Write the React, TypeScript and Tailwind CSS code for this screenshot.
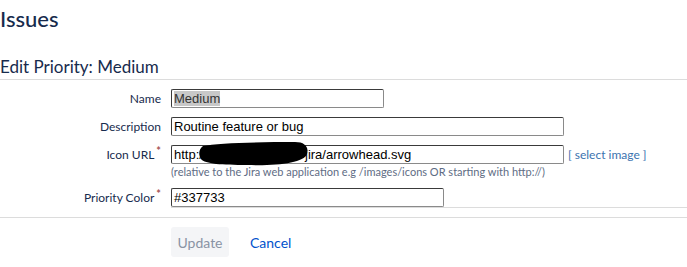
import React from "react";

function Label({ text, required }: { text: string; required?: boolean }) {
  return (
    <div className="w-[161px] shrink-0 text-right text-[12px] leading-[18px] text-[#172b4d] font-['Lato',sans-serif]">
      {text}
      {required && <span className="relative -top-[4px] ml-[2px] text-[11px] font-bold text-[#a85555]">*</span>}
    </div>
  );
}

function Box({ w, children }: { w: string; children: React.ReactNode }) {
  return (
    <div
      className={`${w} relative h-[19px] overflow-hidden rounded-[2px] border border-[#3a3a3a] border-r-[#8a8a8a] border-b-[#8a8a8a] bg-white pl-[2px] text-[13px] leading-[17px] text-black font-['Liberation_Sans',Arial,sans-serif]`}
    >
      {children}
    </div>
  );
}

export default function App() {
  return (
    <div className="relative h-[267px] w-[687px] overflow-hidden bg-white font-['Lato',sans-serif]">
      <h1 className="pt-[3px] text-[22px] leading-[32px] font-medium text-[#172b4d] font-['Lato',sans-serif]">
        Issues
      </h1>
      <h2 className="mt-[20px] text-[17px] leading-[24px] text-[#172b4d] font-['Lato',sans-serif]">
        Edit Priority: Medium
      </h2>
      <div className="h-px bg-[#dcdcdc]" />
      <div className="flex flex-col pt-[9px]">
        <div className="flex h-[19px] items-center gap-[10px]">
          <Label text="Name" />
          <Box w="w-[213px]">
            <span className="bg-[#c8c8c8] text-[#333]">Medium</span>
          </Box>
        </div>
        <div className="mt-[9px] flex h-[19px] items-center gap-[10px]">
          <Label text="Description" />
          <Box w="w-[393px]">Routine feature or bug</Box>
        </div>
        <div className="mt-[9px] flex h-[19px] items-center gap-[10px]">
          <Label text="Icon URL" required />
          <Box w="w-[393px]">
            http:/
            <span className="absolute left-[133px] top-0">jira/arrowhead.svg</span>
          </Box>
          <span className="-ml-[6px] text-[12px] text-[#3b73af] font-['Lato',sans-serif]">[ select image ]</span>
        </div>
        <div className="ml-[171px] mt-[1px] text-[11px] leading-[14px] text-[#5e6c84] font-['Lato',sans-serif]">
          (relative to the Jira web application e.g /images/icons OR starting with http://)
        </div>
        <div className="relative mt-[9px] flex h-[19px] items-center gap-[10px]">
          <Label text="Priority Color" required />
          <Box w="w-[273px]">#337733</Box>
        </div>
        <div className="ml-[171px] h-px bg-[#dcdcdc]" />
        <div className="mt-[9px] h-px bg-[#dcdcdc]" />
        <div className="ml-[171px] mt-[9px] flex items-center gap-[21px]">
          <div className="flex h-[30px] w-[58px] items-center justify-center rounded-[3px] bg-[#f4f5f7] text-[14px] text-[#8993a4] font-['Lato',sans-serif]">
            Update
          </div>
          <span className="text-[14px] text-[#0052cc] font-['Lato',sans-serif]">Cancel</span>
        </div>
      </div>
      {/* redaction scribble */}
      <svg className="absolute left-[197px] top-[141px]" width="114" height="27" viewBox="0 0 114 27">
        <path
          d="M6 5 C 20 2, 60 1, 98 1 C 108 1, 112 6, 110 13 C 107 22, 80 25, 50 24 C 25 24, 8 23, 4 18 C 1 13, 2 8, 6 5 Z"
          fill="#000"
        />
      </svg>
    </div>
  );
}
